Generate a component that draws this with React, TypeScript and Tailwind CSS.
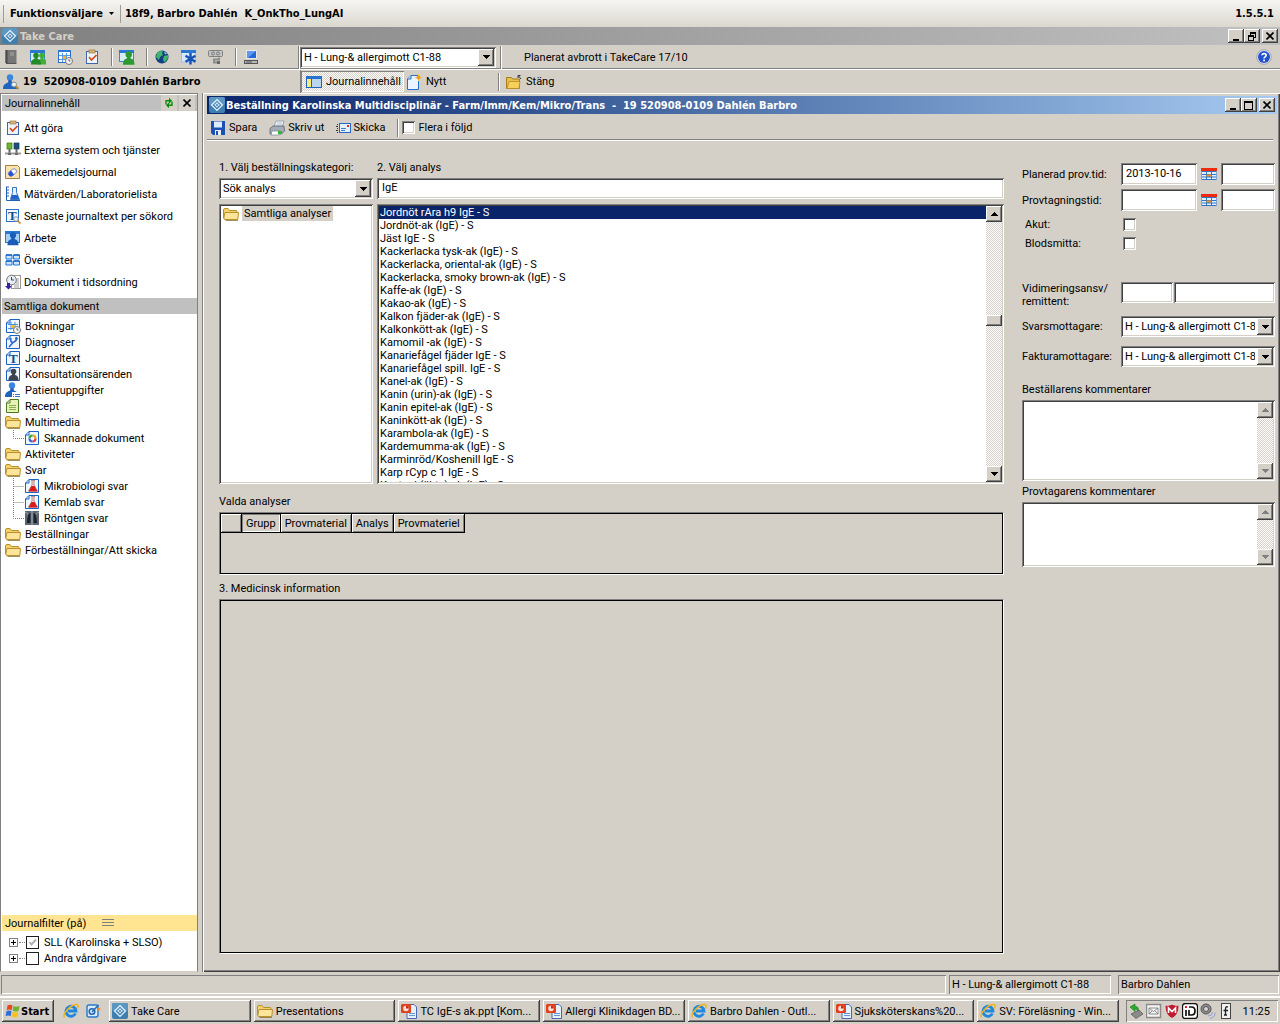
import { useState, type ReactNode } from "react";

// classic 3D bevels
const SUNKEN =
  "shadow-[inset_1px_1px_0_#808080,inset_-1px_-1px_0_#fff,inset_2px_2px_0_#404040,inset_-2px_-2px_0_#d4d0c8]";
const RAISED =
  "shadow-[inset_-1px_-1px_0_#404040,inset_1px_1px_0_#fff,inset_-2px_-2px_0_#808080]";
const THIN_SUNKEN = "shadow-[inset_1px_1px_0_#808080,inset_-1px_-1px_0_#fff]";
const DITHER =
  "bg-[repeating-conic-gradient(#fff_0_25%,#d4d0c8_0_50%)] bg-[length:2px_2px]";
const BOLD = "font-['DejaVu_Sans_Condensed','DejaVu_Sans',sans-serif] font-bold";

type IconProps = { children: ReactNode; size?: number };

const Svg = ({ children, size = 16 }: IconProps) => (
  <svg width={size} height={size} viewBox="0 0 16 16" className="shrink-0" aria-hidden="true">
    {children}
  </svg>
);

const Page = () => (
  <path d="M5 1.5H14.5V14.5H1.5V5Z M1.5 5H5V1.5" fill="#eef6ff" stroke="#1a62c4" />
);

const Person = ({ x = 0, y = 0, color = "#2f8f2f" }) => (
  <g transform={`translate(${x} ${y})`} fill={color}>
    <circle cx="5" cy="3" r="2.8" />
    <path d="M0 12c0-4 1.500-5 3.300-5.500L3.800 5h2.400L6.700 6.500C8.500 7 10 8 10 12Z" />
  </g>
);

const Window = () => (
  <>
    <rect x="0.500" y="1.500" width="14" height="11" fill="#d9ecfb" stroke="#3b86d8" />
    <rect x="0" y="1" width="15" height="3" fill="#2a78d4" />
  </>
);

const TakeCareIcon = () => (
  <Svg>
    <rect width="16" height="16" rx="2" fill="#3f7fb0" />
    <rect width="16" height="8" rx="2" fill="#5a97c2" />
    <path d="M8 2.500 13.500 8 8 13.500 2.500 8Z" fill="none" stroke="#e4f1fa" strokeWidth="1.200" />
    <path d="M8 5.200 10.800 8 8 10.800 5.200 8Z" fill="#cfe3f2" />
    <path d="M6.600 6.600 9.400 9.400M9.400 6.600 6.600 9.400" stroke="#3f7fb0" strokeWidth="0.700" />
  </Svg>
);

const BookIcon = () => (
  <Svg>
    <path d="M2.500 1h11v13h-11Z" fill="#777" />
    <path d="M2.500 1h2v13h-2Z" fill="#4a4a4a" />
    <path d="M7 4h4M7 6h4" stroke="#aaa" />
    <path d="M3 14.500h10.500" stroke="#555" />
  </Svg>
);

const PeopleIcon = () => (
  <Svg>
    <Window />
    <Person x={7} y={3.5} color="#3fae3a" />
    <Person x={1} y={3.5} color="#238a27" />
  </Svg>
);

const PersonWindowIcon = () => (
  <Svg>
    <Window />
    <g transform="translate(4 2) scale(1.150)">
      <Person color="#2c9a2c" />
    </g>
  </Svg>
);

const ClockBadge = () => (
  <>
    <circle cx="12" cy="12" r="3.500" fill="#f4f4f4" stroke="#777" />
    <path d="M12 10v2h1.500" fill="none" stroke="#444" strokeWidth="0.800" />
  </>
);

const CalendarIcon = () => (
  <Svg>
    <rect x="1.500" y="1.500" width="12" height="12" fill="#fff" stroke="#2a6fd0" />
    <rect x="1" y="1" width="13" height="2" fill="#2a78d4" />
    <path d="M5.500 4v9M9.500 4v9M2 6.500h11M2 10.500h11" stroke="#5a9be8" />
    <rect x="6" y="7" width="3" height="3" fill="#f5b81c" />
    <ClockBadge />
  </Svg>
);

const ClipboardIcon = () => (
  <Svg>
    <rect x="2.500" y="2.500" width="11" height="12" fill="#eef4fc" stroke="#3f66a8" />
    <rect x="5" y="1" width="6" height="3" fill="#d8b878" stroke="#9a7a3a" strokeWidth="0.700" />
    <path d="M5 8 7.500 11 12.500 6" fill="none" stroke="#d8481c" strokeWidth="1.700" />
  </Svg>
);

const GlobeIcon = () => (
  <Svg>
    <circle cx="8" cy="8" r="6.500" fill="#103f86" />
    <path d="M3 4c2-2.500 5-2.500 6-2L8 4 9 6 6 8 5 11 2 8Z" fill="#3fb46a" />
    <path d="M10 7l4-1c.5 3-1 6-4 7.500L9 10Z" fill="#3fb46a" />
    <path d="M10 2.500l3 2-2 1Z" fill="#7fd7f0" />
  </Svg>
);

const StarIcon = () => (
  <Svg>
    <rect x="0.500" y="2" width="14" height="11" fill="#d6e8fa" stroke="#9cc0e4" />
    <path d="M0 1h15v3H0Z" fill="#2a78d4" />
    <path d="M9.500 4v11.500M4.500 6.800l10 6M14.500 6.800l-10 6" stroke="#1453b4" strokeWidth="2.400" />
  </Svg>
);

const CertificateIcon = () => (
  <Svg>
    <rect x="0.500" y="1.500" width="14" height="6" rx="1" fill="#c4c4c4" stroke="#808080" />
    <circle cx="5" cy="4.500" r="1.500" fill="none" stroke="#777" />
    <circle cx="10" cy="4.500" r="1.500" fill="none" stroke="#777" />
    <path d="M11 8.500v2H6v3h5" fill="none" stroke="#8c8c8c" strokeWidth="2" />
    <path d="M9 13.500h3" stroke="#6a6a6a" strokeWidth="3" />
  </Svg>
);

const ComputerIcon = () => (
  <Svg>
    <rect x="3.500" y="1.500" width="10" height="8" fill="#2465d8" stroke="#e8e8e8" />
    <path d="M4 2h9L5 9H4Z" fill="#5e97f0" />
    <rect x="1.500" y="11.500" width="13" height="3" fill="#b8b8b8" stroke="#555" />
    <path d="M3 13h6" stroke="#555" />
  </Svg>
);

const HelpIcon = () => (
  <Svg>
    <circle cx="8" cy="8" r="7.300" fill="#d8e2f4" stroke="#9a9a9a" strokeWidth="0.800" />
    <circle cx="8" cy="8" r="6" fill="#2351cc" />
    <path d="M6 6.300C6 4 10.200 4 10.200 6.300 10.200 7.800 8 7.800 8 9.500" fill="none" stroke="#fff" strokeWidth="1.600" />
    <rect x="7.200" y="10.600" width="1.700" height="1.700" fill="#fff" />
  </Svg>
);

const PatientSearchIcon = () => (
  <Svg>
    <circle cx="7" cy="3.500" r="3.200" fill="#3b86dc" />
    <path d="M0 15c0-5 3-5.500 5-6.500L5.500 6h3L9 8.500c2 1 5 1 5 6.500Z" fill="#1f64c0" />
    <circle cx="11" cy="10.500" r="2.500" fill="#e8f2fb" stroke="#888" />
    <path d="M13 12.500 15.500 15" stroke="#c08a30" strokeWidth="2" />
  </Svg>
);

const PanelIcon = () => (
  <Svg>
    <rect x="0.500" y="2.500" width="15" height="11" fill="#b9d6ee" stroke="#1f62b8" />
    <rect x="0" y="2" width="16" height="3" fill="#2672cc" />
    <rect x="1" y="5" width="4" height="8" fill="#f8ec7a" />
    <path d="M5.500 5v8" stroke="#1f62b8" />
  </Svg>
);

const NewIcon = () => (
  <Svg>
    <path d="M5 1.500H12.500V15.500H1.500V5Z" fill="#eaf5ff" stroke="#2a6fd0" />
    <path d="M1.500 5H5V1.500" fill="#bcdcf8" stroke="#2a6fd0" />
    <path d="M12.500 0v7M9 3.500h7" stroke="#f9c748" />
    <circle cx="12.500" cy="3.500" r="2" fill="#f59a18" />
  </Svg>
);

const CloseFolderIcon = () => (
  <Svg>
    <path d="M.5 14.500v-11h5l1 1.500h7v9.500Z" fill="#e8c050" stroke="#a87c18" />
    <path d="M1 14.500 3 7.500h11l-1 7Z" fill="#f8cf58" stroke="#b88a20" strokeWidth="0.800" />
    <path d="M15 5 12.500 2M12 4V1.500h2.500" fill="none" stroke="#333" />
  </Svg>
);

const FolderIcon = () => (
  <Svg>
    <path d="M.5 12V4q0-1.500 1.500-1.500h3l1.500 2H13q1 0 1 1V12Z" fill="#f3d06a" stroke="#b8912c" />
    <path d="M1.500 13.500.8 12 2 6.500H15.500L14.800 13.500Z" fill="#fbe59a" stroke="#b8912c" />
    <path d="M2.500 14.500h12.500" stroke="#7a6424" strokeWidth="0.700" />
  </Svg>
);

const NetworkIcon = () => (
  <Svg>
    <rect x="2" y="1" width="5" height="6" fill="#6cb82c" stroke="#3a7414" strokeWidth="0.700" />
    <rect x="9" y="1" width="5" height="6" fill="#1c4f80" stroke="#123a60" strokeWidth="0.700" />
    <path d="M4.500 7v4M11.500 7v4" stroke="#666" strokeWidth="2" />
    <path d="M0 11.500h16" stroke="#9a9a9a" strokeWidth="2" />
    <path d="M3 11h3v2H3ZM10 11h3v2h-3Z" fill="#6a6a6a" />
  </Svg>
);

const PillIcon = () => (
  <Svg>
    <path d="M.5 1.500h12l2 2v11H.5Z" fill="#fbe3ae" stroke="#a8803c" />
    <g transform="rotate(-38 7.500 8.500)">
      <rect x="3" y="6" width="9" height="5" rx="2.500" fill="#f4f6ff" stroke="#5a6cc0" strokeWidth="0.700" />
      <path d="M7.500 6H5.500a2.500 2.500 0 0 0 0 5h2Z" fill="#2b50d8" />
    </g>
  </Svg>
);

const FlaskIcon = () => (
  <Svg>
    <path d="M1 1h3M1 4h3M1 7h3M1 10h3M1.500 1v13.500H15" fill="none" stroke="#1f5fb4" />
    <path d="M7.500 1.500h4v5l3 7h-9l2-7Z" fill="#e4f1fc" stroke="#3a78c0" />
    <path d="M7 9h5.500l1.500 4H5.500Z" fill="#1f64c8" />
  </Svg>
);

const LetterT = () => (
  <text x="4" y="13" fontSize="13" fontWeight="700" fontFamily="Liberation Serif, serif" fill="#0f4f8c">
    T
  </text>
);

const TextSearchIcon = () => (
  <Svg>
    <rect x="1.500" y="1.500" width="12" height="12" fill="#f2f8ff" stroke="#2a6fc0" />
    <g transform="translate(-1 -1)">
      <LetterT />
    </g>
    <circle cx="11" cy="11" r="2.300" fill="#e8f2fb" stroke="#8894a4" />
    <path d="M12.800 12.800 15.500 15.500" stroke="#c89038" strokeWidth="1.800" />
  </Svg>
);

const WorkIcon = () => (
  <Svg>
    <rect x="0.500" y="1.500" width="14" height="11" fill="#a8d0f4" stroke="#2a78d4" />
    <rect x="0" y="1" width="15" height="3" fill="#2a78d4" />
    <g transform="translate(2.500 2) scale(1.100)">
      <Person color="#1a5cb8" />
    </g>
  </Svg>
);

const GridIcon = () => (
  <Svg>
    <path d="M1 3h6v4H1ZM8.500 3h6v4h-6ZM1 9h6v4H1ZM8.500 9h6v4h-6Z" fill="#cfe4fa" stroke="#1f78dc" />
    <path d="M1 3h6M8.500 3h6M1 9h6M8.500 9h6" stroke="#1766c8" strokeWidth="1.500" />
  </Svg>
);

const TimeOrderIcon = () => (
  <Svg>
    <rect x="6.500" y="1.500" width="9" height="13" fill="#fff" stroke="#999" />
    <path d="M11 5h3M11 7h3M11 9h3M9 11h5M9 13h5" stroke="#777" strokeWidth="0.700" />
    <circle cx="6.500" cy="6" r="4.800" fill="#e8eef8" stroke="#777" />
    <path d="M6.500 3v3h2.500" fill="none" stroke="#444" />
    <path d="M2 9v3H0l3.500 3.500L7 12H5V9Z" fill="#3a1fa0" />
  </Svg>
);

const BookingDocIcon = () => (
  <Svg>
    <Page />
    <path d="M6 4v8M10 4v8M3 6.500h10M3 10.500h8" stroke="#4a90e4" />
    <rect x="6.500" y="7" width="3" height="3" fill="#f5c21c" />
    <ClockBadge />
  </Svg>
);

const DiagnosisIcon = () => (
  <Svg>
    <Page />
    <path d="M6 4c-1 4 1 5 3 4s3-3 2-5M8 8.500 4 13" fill="none" stroke="#2c62d0" strokeWidth="1.500" />
    <circle cx="11.500" cy="4.500" r="1.300" fill="#2c62d0" />
  </Svg>
);

const TextDocIcon = () => (
  <Svg>
    <Page />
    <LetterT />
  </Svg>
);

const ConsultIcon = () => (
  <Svg>
    <Page />
    <Person x={3.5} y={2.5} color="#3c4450" />
  </Svg>
);

const PatientIcon = () => (
  <Svg>
    <circle cx="7" cy="3.500" r="3.200" fill="#3b86dc" />
    <path d="M0 15c0-5 3-5.500 5-6.500L5.500 6h3L9 8.500c2 1 4 1 4 6.500Z" fill="#1f64c0" />
    <rect x="7" y="10" width="9" height="6" fill="#fff" />
    <path d="M8 12.500h1M10 12.500h5M8 14.500h1M10 14.500h5" stroke="#3a78c0" />
  </Svg>
);

const RecipeIcon = () => (
  <Svg>
    <path d="M5 1.500H13.500V14.500H1.500V5Z M1.500 5H5V1.500" fill="#e8f2b8" stroke="#4c7a1c" />
    <path d="M4 7.500h7M4 9.500h7M4 11.500h7" stroke="#8cac50" />
  </Svg>
);

const ScanIcon = () => (
  <Svg>
    <Page />
    <g fill="none" strokeWidth="2.200">
      <path d="M8.500 5.500A3 3 0 0 1 11.500 8.500" stroke="#f0a020" />
      <path d="M11.500 8.500A3 3 0 0 1 8.500 11.500" stroke="#e04040" />
      <path d="M8.500 11.500A3 3 0 0 1 5.500 8.500" stroke="#4060d8" />
      <path d="M5.500 8.500A3 3 0 0 1 8.500 5.500" stroke="#38a838" />
    </g>
  </Svg>
);

const LabDocIcon = () => (
  <Svg>
    <Page />
    <path d="M7 2.500h4M8 3v4l-3.500 6h9L10 7V3" fill="#f4dede" stroke="#a06060" strokeWidth="0.700" />
    <path d="M7.500 8h3l3 5.500h-9Z" fill="#d81c1c" />
  </Svg>
);

const XrayIcon = () => (
  <Svg>
    <rect x="1" y="1" width="14" height="14" fill="#5c6670" />
    <path d="M6.500 3C4 3 3 9 3 13h3.500ZM9.500 3C12 3 13 9 13 13H9.500Z" fill="#1c222a" />
    <path d="M8 1v14" stroke="#a4b0bc" />
    <path d="M1 2l3 2M15 2l-3 2" stroke="#9cacb8" />
  </Svg>
);

const SaveIcon = () => (
  <Svg>
    <path d="M1 1h14v14H3L1 13Z" fill="#1c50b4" />
    <rect x="4" y="1.500" width="8" height="6" fill="#dcecfc" />
    <rect x="5" y="10" width="6" height="5" fill="#e8eef8" />
    <rect x="6" y="11" width="2" height="4" fill="#1c50b4" />
  </Svg>
);

const PrintIcon = () => (
  <Svg>
    <path d="M5 7 7 1h8l-2 6Z" fill="#f2f6fa" stroke="#8a94a0" strokeWidth="0.800" />
    <path d="M8 3h5M7.500 5h5" stroke="#9ab" strokeWidth="0.700" />
    <path d="M1 8.500 4 6h11l.5 5-3 3H1Z" fill="#a4acb8" stroke="#5a626c" strokeWidth="0.800" />
    <path d="M3 11h8l-1 4H2Z" fill="#fff" stroke="#7a828c" strokeWidth="0.700" />
    <rect x="9" y="11" width="4" height="3" fill="#30b838" />
  </Svg>
);

const SendIcon = () => (
  <Svg>
    <rect x="4.500" y="3.500" width="11" height="9" fill="#e4f0fc" stroke="#2468c8" />
    <path d="M6 8.500h5M6 10.500h4" stroke="#3a7cd4" />
    <rect x="12" y="5" width="2" height="2" fill="#e82c1c" />
    <path d="M2 4.500h1M1 6.500h2M2 8.500h1M1 10.500h2M2 12.500h1" stroke="#333" />
  </Svg>
);

const DateIcon = () => (
  <Svg>
    <rect x="0.500" y="2" width="15" height="12" fill="#2f74c8" />
    <rect x="0" y="2" width="16" height="3" fill="#f0280c" />
    <path d="M1 6h4v2H1ZM6 6h4v2H6ZM11 6h4v2h-4ZM1 9h4v1.500H1ZM11 9h4v1.500h-4ZM1 11.500h4v1.500H1ZM6 11.500h4v1.500H6ZM11 11.500h4v1.500h-4Z" fill="#e4f2ff" />
    <rect x="5.500" y="8.500" width="5" height="2" fill="#f09820" />
  </Svg>
);

const IeIcon = () => (
  <Svg>
    <path d="M12.500 10.500A5 5 0 1 1 13 8H5" fill="none" stroke="#1e88dc" strokeWidth="2.800" />
    <path d="M1.500 14.500C-1 11 8 1 14 1.500c2 .5 1 3 0 4" fill="none" stroke="#f0b41c" strokeWidth="1.500" />
  </Svg>
);

const OutlookIcon = () => (
  <Svg>
    <rect x="2" y="2" width="11" height="12" rx="2" fill="#d8ecfc" stroke="#2a78cc" strokeWidth="1.400" />
    <circle cx="7" cy="8.500" r="2.800" fill="none" stroke="#1c64b8" strokeWidth="1.500" />
    <path d="M7 9 13.500 2" stroke="#2a68b4" strokeWidth="1.500" />
    <path d="M13 4.500 16 6l-3 2Z" fill="#f08c1c" />
  </Svg>
);

const PptIcon = () => (
  <Svg>
    <path d="M6 1.500h7l2.500 2.500v11.500H6Z" fill="#e8f0fc" stroke="#4468b0" />
    <path d="M8 10.500h6M8 12.500h6" stroke="#6a94d8" />
    <rect x="0" y="1" width="10" height="9" rx="1.500" fill="#e0401c" />
    <circle cx="5" cy="5.500" r="2.800" fill="#fbe0d8" />
    <path d="M5 5.500V2.700A2.800 2.800 0 0 1 7.800 5.500Z" fill="#c02c10" />
  </Svg>
);

const StartIcon = () => (
  <Svg>
    <path d="M2.500 2.500Q5 1 7.500 2.500L6.700 7.300Q4.500 6 1.700 7.200Z" fill="#e8481c" />
    <path d="M8.500 3Q11 4.300 14.500 3L13.500 8Q10.500 9 7.700 7.800Z" fill="#6cb42c" />
    <path d="M1.500 8.200Q4 7 6.500 8.300L5.700 13Q3.500 11.800.6 13Z" fill="#2c6cdc" />
    <path d="M7.500 8.800Q10 10 13.300 9L12.400 14Q9.500 15 6.700 13.700Z" fill="#f8c01c" />
  </Svg>
);

const TrayDeviceIcon = () => (
  <Svg>
    <path d="M3 11 11 7l4 4-7 4.500Z" fill="#8a8a8a" stroke="#555" strokeWidth="0.700" />
    <path d="M2 4l5-3v2.500c3 0 4 2 3 4.500-1-1.500-2-2-3-2V8.500Z" fill="#2cac2c" stroke="#177017" strokeWidth="0.600" />
  </Svg>
);

const TrayMailIcon = () => (
  <Svg>
    <rect x="0.500" y="1.500" width="14" height="13" fill="#f4f4f4" stroke="#8a8a8a" strokeWidth="1.500" />
    <path d="M3 5h9v6H3Zl4.500 3.500L12 5M3 11l3-3M12 11 9 8" fill="none" stroke="#777" strokeWidth="0.800" />
  </Svg>
);

const TrayShieldIcon = () => (
  <Svg>
    <path d="M1 2q3.500 1 7-1 3.500 2 7 1c0 7-2 11-7 13.500C3 13 1 9 1 2Z" fill="#c01c30" stroke="#ddd" />
    <path d="M4.500 10V5L8 8.500 11.500 5v5" fill="none" stroke="#fff" strokeWidth="1.600" />
  </Svg>
);

const TrayDIcon = () => (
  <Svg>
    <rect x="0.500" y="0.500" width="15" height="15" rx="3" fill="#fff" stroke="#111" strokeWidth="1.300" />
    <path d="M4 7v6M7 4h2.500q3.500 0 3.500 4t-3.500 4H7V7" fill="none" stroke="#111" strokeWidth="1.700" />
    <rect x="3" y="3" width="2" height="2" fill="#e02020" />
  </Svg>
);

const TrayVolumeIcon = () => (
  <Svg>
    <circle cx="6" cy="6" r="5" fill="#8c8c8c" stroke="#555" />
    <circle cx="6" cy="6" r="2.500" fill="#d4d4d4" stroke="#555" />
    <path d="M8 13q4 0 4.500-4M10 15.500q5-1 5-6" fill="none" stroke="#8c9ce0" />
  </Svg>
);

const TrayFIcon = () => (
  <Svg>
    <rect x="3.500" y="0.500" width="9" height="15" fill="#f0f0f0" stroke="#444" />
    <path d="M10 4Q7.500 3 7.500 6v6M5.500 7.500H10M6 12h3" fill="none" stroke="#222" strokeWidth="1.300" />
  </Svg>
);

const RefreshIcon = () => (
  <Svg size={12}>
    <path d="M4 10V5h5M12 6v5H7" fill="none" stroke="#0a8a0a" strokeWidth="1.800" />
    <path d="M8 1l4 4-4 4ZM8 7l-4 4 4 4Z" fill="#0a8a0a" />
  </Svg>
);

const CrossIcon = () => (
  <svg width="8" height="8" viewBox="0 0 8 8" aria-hidden="true">
    <path d="M.5.5 7.500 7.500M7.500.5.5 7.500" stroke="#000" strokeWidth="1.600" />
  </svg>
);

const Arrow = ({ up = false, color = "#000" }) => (
  <svg width="7" height="4" viewBox="0 0 7 4" shapeRendering="crispEdges" aria-hidden="true">
    <path d={up ? "M0 4 3.500 0 7 4Z" : "M0 0h7L3.500 4Z"} fill={color} />
  </svg>
);

const WindowButtons = ({ restore = false }) => {
  const button = `flex h-3.5 w-4 items-center justify-center bg-[#d4d0c8] ${RAISED}`;
  return (
    <div className="flex">
      <button className={button} aria-label="Minimera">
        <svg width="10" height="9" viewBox="0 0 10 9">
          <path d="M2 7h6v2H2Z" />
        </svg>
      </button>
      <button className={button} aria-label={restore ? "Återställ" : "Maximera"}>
        <svg width="10" height="9" viewBox="0 0 10 9" shapeRendering="crispEdges">
          {restore ? (
            <path d="M3 0h6v6H7V5h1V2H4v1H3ZM1 3h6v6H1ZM2 5v3h4V5Z" fillRule="evenodd" />
          ) : (
            <path d="M0 0h9v9H0ZM1 2v6h7V2Z" fillRule="evenodd" />
          )}
        </svg>
      </button>
      <button className={`ml-0.5 ${button}`} aria-label="Stäng fönster">
        <CrossIcon />
      </button>
    </div>
  );
};

const Separator = () => (
  <span className="mr-1.5 ml-[11px] h-[18px] w-0.5 border-r border-l border-r-white border-l-[#808080]" />
);

const Combo = ({ id, label, value }: { id: string; label?: string; value: string }) => (
  <div className="relative flex h-[21px] w-full">
    <select
      id={id}
      aria-label={label}
      className={`w-full appearance-none rounded-none bg-white pr-5 pl-1 ${SUNKEN}`}
    >
      <option>{value}</option>
    </select>
    <span
      className={`pointer-events-none absolute top-0.5 right-0.5 flex h-[17px] w-4 items-center justify-center bg-[#d4d0c8] ${RAISED}`}
    >
      <Arrow />
    </span>
  </div>
);

const ScrollBar = ({ disabled = false }) => {
  const button = `flex h-4 w-4 shrink-0 items-center justify-center bg-[#d4d0c8] ${RAISED}`;
  const color = disabled ? "#808080" : "#000";
  return (
    <div className={`flex w-4 flex-col ${DITHER}`}>
      <button className={button} aria-label="Rulla upp">
        <Arrow up color={color} />
      </button>
      <div className="flex flex-1 flex-col">
        {!disabled && (
          <>
            <div className="h-[93px]" />
            <div className={`h-[11px] bg-[#d4d0c8] ${RAISED}`} />
          </>
        )}
      </div>
      <button className={button} aria-label="Rulla ned">
        <Arrow color={color} />
      </button>
    </div>
  );
};

const TopBar = () => (
  <header
    className={`flex h-[27px] items-center bg-linear-to-b from-[#f6f6f4] to-[#dad7ce] pr-1.5 pl-[3px] ${BOLD}`}
  >
    <span className="h-[18px] w-px bg-[#a09c94]" />
    <button className="ml-1.5 flex items-center gap-1.5">
      Funktionsväljare
      <svg width="5" height="3" viewBox="0 0 5 3" aria-hidden="true">
        <path d="M0 0h5L2.500 3Z" />
      </svg>
    </button>
    <span className="ml-1.5 h-[18px] w-px bg-[#a09c94]" />
    <span className="ml-1 whitespace-pre">{"18f9, Barbro Dahlén  K_OnkTho_LungAI"}</span>
    <span className="ml-auto">1.5.5.1</span>
  </header>
);

const MainToolbar = () => (
  <div className="flex h-[25px] items-center border-b border-white pl-[3px] shadow-[inset_0_-1px_0_#808080]">
    <div className="flex gap-[11px]">
      <BookIcon />
      <PeopleIcon />
      <CalendarIcon />
      <ClipboardIcon />
    </div>
    <Separator />
    <PersonWindowIcon />
    <Separator />
    <div className="flex gap-[11px]">
      <GlobeIcon />
      <StarIcon />
      <CertificateIcon />
    </div>
    <Separator />
    <ComputerIcon />
    <span className="ml-[39px] h-[23px] w-0.5 border-r border-l border-r-white border-l-[#808080]" />
    <div className="w-[196px]">
      <Combo id="unit" label="Enhet" value="H - Lung-& allergimott C1-88" />
    </div>
    <span className="ml-1 h-[23px] w-0.5 border-r border-l border-r-white border-l-[#808080]" />
    <span className="ml-[22px]">Planerat avbrott i TakeCare 17/10</span>
    <button className="mr-2 ml-auto" aria-label="Hjälp">
      <HelpIcon />
    </button>
  </div>
);

const PatientBar = () => (
  <div className="flex h-[23px] items-center">
    <div className="flex w-[300px] shrink-0 items-center gap-1 pl-[3px]">
      <PatientSearchIcon />
      <span className={`whitespace-pre ${BOLD}`}>{"19  520908-0109 Dahlén Barbro"}</span>
    </div>
    <div className="flex h-full w-[200px] items-center border-l border-[#808080]">
      <button className={`flex h-[21px] w-[103px] items-center gap-1 pl-[5px] ${DITHER} ${THIN_SUNKEN}`}>
        <PanelIcon />
        Journalinnehåll
      </button>
      <button className="ml-0.5 flex items-center gap-1">
        <NewIcon />
        Nytt
      </button>
      <span className="ml-auto h-[18px] w-0.5 border-r border-l border-r-white border-l-[#808080]" />
    </div>
    <button className="ml-1.5 flex items-center gap-1">
      <CloseFolderIcon />
      Stäng
    </button>
  </div>
);

const shortcuts = [
  { icon: <ClipboardIcon />, label: "Att göra" },
  { icon: <NetworkIcon />, label: "Externa system och tjänster" },
  { icon: <PillIcon />, label: "Läkemedelsjournal" },
  { icon: <FlaskIcon />, label: "Mätvärden/Laboratorielista" },
  { icon: <TextSearchIcon />, label: "Senaste journaltext per sökord" },
  { icon: <WorkIcon />, label: "Arbete" },
  { icon: <GridIcon />, label: "Översikter" },
  { icon: <TimeOrderIcon />, label: "Dokument i tidsordning" },
];

type TreeItem = { icon: ReactNode; label: string; child?: boolean; last?: boolean };

const documents: TreeItem[] = [
  { icon: <BookingDocIcon />, label: "Bokningar" },
  { icon: <DiagnosisIcon />, label: "Diagnoser" },
  { icon: <TextDocIcon />, label: "Journaltext" },
  { icon: <ConsultIcon />, label: "Konsultationsärenden" },
  { icon: <PatientIcon />, label: "Patientuppgifter" },
  { icon: <RecipeIcon />, label: "Recept" },
  { icon: <FolderIcon />, label: "Multimedia" },
  { icon: <ScanIcon />, label: "Skannade dokument", child: true, last: true },
  { icon: <FolderIcon />, label: "Aktiviteter" },
  { icon: <FolderIcon />, label: "Svar" },
  { icon: <LabDocIcon />, label: "Mikrobiologi svar", child: true },
  { icon: <LabDocIcon />, label: "Kemlab svar", child: true },
  { icon: <XrayIcon />, label: "Röntgen svar", child: true, last: true },
  { icon: <FolderIcon />, label: "Beställningar" },
  { icon: <FolderIcon />, label: "Förbeställningar/Att skicka" },
];

const Branch = ({ last = false }) => (
  <svg width="19" height="16" viewBox="0 0 19 16" className="shrink-0" aria-hidden="true">
    <path
      d={last ? "M8.500 0V8.500H19" : "M8.500 0V16M8.500 8.500H19"}
      fill="none"
      stroke="#808080"
      strokeDasharray="1 1"
    />
  </svg>
);

const FilterRow = ({ id, label, on = false }: { id: string; label: string; on?: boolean }) => (
  <div className="flex h-4 items-center">
    <button aria-label={`Expandera ${label}`} className="flex">
      <svg width="9" height="9" viewBox="0 0 9 9" shapeRendering="crispEdges">
        <rect x="0.500" y="0.500" width="8" height="8" fill="#fff" stroke="#808080" />
        <path d="M2 4h5v1H2ZM4 2h1v5H4Z" />
      </svg>
    </button>
    <span className="mx-px w-1.5 border-t border-dotted border-[#808080]" />
    <span className="relative flex">
      <input
        id={id}
        type="checkbox"
        defaultChecked={on}
        className="h-[13px] w-[13px] appearance-none border border-[#202020] bg-white"
      />
      {on && (
        <svg className="pointer-events-none absolute inset-0" width="13" height="13" viewBox="0 0 13 13">
          <path d="M3.500 6 5.500 8.500 10 3.500" fill="none" stroke="#b0b0b0" strokeWidth="2" />
        </svg>
      )}
    </span>
    <label htmlFor={id} className="ml-[5px]">
      {label}
    </label>
  </div>
);

const Sidebar = () => (
  <aside className="flex w-[198px] shrink-0 flex-col border border-[#808080] border-b-[#d4d0c8] bg-white pt-px pl-px">
    <div className="flex h-4 items-center bg-[#c0c0c0] pr-0.5 pl-[3px]">
      <h2>Journalinnehåll</h2>
      <button className="ml-auto flex h-4 w-4 items-center justify-center bg-[#d4d0c8]" aria-label="Uppdatera">
        <RefreshIcon />
      </button>
      <button className="ml-0.5 flex h-4 w-4 items-center justify-center bg-[#d4d0c8]" aria-label="Stäng panel">
        <CrossIcon />
      </button>
    </div>
    <ul className="mt-1.5 pl-[3px]">
      {shortcuts.map((item) => (
        <li key={item.label}>
          <a href="#" className="flex h-[22px] items-center gap-[3px]">
            {item.icon}
            {item.label}
          </a>
        </li>
      ))}
    </ul>
    <h2 className="mt-[5px] flex h-4 items-center bg-[#c0c0c0] pl-0.5">Samtliga dokument</h2>
    <ul className="mt-1 pl-[3px]">
      {documents.map((item) => (
        <li key={item.label}>
          <a href="#" className="flex h-4 items-center">
            {item.child && <Branch last={item.last} />}
            {item.icon}
            <span className="ml-1">{item.label}</span>
          </a>
        </li>
      ))}
    </ul>
    <div className="mt-auto flex h-4 items-center gap-4 bg-[#ffe591] pl-[3px]">
      <h2>Journalfilter (på)</h2>
      <span className="h-2 w-3 bg-[repeating-linear-gradient(#808080_0_1px,#ffe591_1px_3px)]" />
    </div>
    <div className="mt-[3px] mb-[5px] pl-[7px]">
      <FilterRow id="filter-sll" label="SLL (Karolinska + SLSO)" on />
      <FilterRow id="filter-other" label="Andra vårdgivare" />
    </div>
  </aside>
);

const analyses = [
  "Jordnöt rAra h9 IgE - S",
  "Jordnöt-ak (IgE) - S",
  "Jäst IgE - S",
  "Kackerlacka tysk-ak (IgE) - S",
  "Kackerlacka, oriental-ak (IgE) - S",
  "Kackerlacka, smoky brown-ak (IgE) - S",
  "Kaffe-ak (IgE) - S",
  "Kakao-ak (IgE) - S",
  "Kalkon fjäder-ak (IgE) - S",
  "Kalkonkött-ak (IgE) - S",
  "Kamomil -ak (IgE) - S",
  "Kanariefågel fjäder IgE - S",
  "Kanariefågel spill. IgE - S",
  "Kanel-ak (IgE) - S",
  "Kanin (urin)-ak (IgE) - S",
  "Kanin epitel-ak (IgE) - S",
  "Kaninkött-ak (IgE) - S",
  "Karambola-ak (IgE) - S",
  "Kardemumma-ak (IgE) - S",
  "Karminröd/Koshenill IgE - S",
  "Karp rCyp c 1 IgE - S",
  "Kastanj (äkta)-ak (IgE) - S",
];

const AnalysisPicker = () => {
  const [selected, setSelected] = useState(0);

  return (
    <div className="flex gap-1">
      <div className="flex w-[154px] shrink-0 flex-col">
        <label htmlFor="category" className="mb-1">
          1. Välj beställningskategori:
        </label>
        <Combo id="category" value="Sök analys" />
        <div className={`mt-[5px] h-[280px] bg-white p-0.5 ${SUNKEN}`}>
          <button className="ml-0.5 flex h-[15px] items-center gap-[3px]">
            <FolderIcon />
            <span className="bg-[#d4d0c8] px-0.5 py-px">Samtliga analyser</span>
          </button>
        </div>
      </div>
      <div className="flex min-w-0 flex-1 flex-col">
        <label htmlFor="analysis" className="mb-1">
          2. Välj analys
        </label>
        <input
          id="analysis"
          defaultValue="IgE"
          className={`h-[21px] w-full bg-white px-[5px] pb-0.5 ${SUNKEN}`}
        />
        <div className={`mt-[5px] flex h-[280px] bg-white p-0.5 ${SUNKEN}`}>
          <ul role="listbox" aria-label="Analyser" className="flex-1 overflow-hidden">
            {analyses.map((name, i) => (
              <li
                key={name}
                role="option"
                aria-selected={i === selected}
                onClick={() => setSelected(i)}
                className={`h-[13px] px-px ${i === selected ? "bg-[#0a246a] text-white" : ""}`}
              >
                {name}
              </li>
            ))}
          </ul>
          <ScrollBar />
        </div>
      </div>
    </div>
  );
};

const GROUP_BOX =
  "border border-[#808080] border-r-white border-b-white shadow-[inset_0_0_0_1px_#000] p-px";

const SelectedTable = () => {
  const th = "h-[19px] border-r border-b border-black px-1 text-left font-normal";
  return (
    <div className={`mt-1 h-[63px] ${GROUP_BOX}`}>
      <table className="border-separate border-spacing-0">
        <thead>
          <tr>
            <th className={`w-[21px] ${th} shadow-[inset_1px_1px_0_#fff,inset_-1px_-1px_0_#808080]`} />
            <th className={`${th} ${THIN_SUNKEN}`}>Grupp</th>
            {["Provmaterial", "Analys", "Provmateriel"].map((name) => (
              <th key={name} className={`${th} shadow-[inset_1px_1px_0_#fff,inset_-1px_-1px_0_#808080]`}>
                {name}
              </th>
            ))}
          </tr>
        </thead>
      </table>
    </div>
  );
};

const CheckBox = ({ id }: { id: string }) => (
  <input id={id} type="checkbox" className={`h-[13px] w-[13px] appearance-none bg-white ${SUNKEN}`} />
);

const DateRow = ({ id, label, value }: { id: string; label: string; value?: string }) => (
  <div className="mb-1 flex h-[22px] items-center">
    <label htmlFor={id} className="w-[99px] shrink-0">
      {label}
    </label>
    <input id={id} defaultValue={value} className={`h-full w-[76px] bg-white px-[5px] pb-0.5 ${SUNKEN}`} />
    <button className="mx-1" aria-label="Välj datum">
      <DateIcon />
    </button>
    <input aria-label={`${label} klockslag`} className={`h-full min-w-0 flex-1 bg-white px-[5px] ${SUNKEN}`} />
  </div>
);

const Comment = ({ id, label, height }: { id: string; label: string; height: string }) => (
  <div className="mb-1">
    <label htmlFor={id} className="mb-1 block">
      {label}
    </label>
    <div className={`flex bg-white p-0.5 ${height} ${SUNKEN}`}>
      <textarea id={id} className="min-w-0 flex-1 resize-none outline-none" />
      <ScrollBar disabled />
    </div>
  </div>
);

const OrderDetails = () => (
  <div className="flex w-[253px] shrink-0 flex-col pt-0.5">
    <DateRow id="planned" label="Planerad prov.tid:" value="2013-10-16" />
    <DateRow id="sampled" label="Provtagningstid:" />
    <div className="flex h-[19px] items-center pl-[3px]">
      <label htmlFor="urgent" className="w-[98px]">
        Akut:
      </label>
      <CheckBox id="urgent" />
    </div>
    <div className="flex h-[19px] items-center pl-[3px]">
      <label htmlFor="blood" className="w-[98px]">
        Blodsmitta:
      </label>
      <CheckBox id="blood" />
    </div>
    <div className="mt-[29px] flex h-[26px] items-start">
      <label htmlFor="referrer" className="w-[99px] shrink-0">
        Vidimeringsansv/ remittent:
      </label>
      <input id="referrer" className={`h-[21px] w-[52px] bg-white px-1 ${SUNKEN}`} />
      <input aria-label="Remittent" className={`ml-px h-[21px] min-w-0 flex-1 bg-white px-1 ${SUNKEN}`} />
    </div>
    <div className="mt-2 flex items-center">
      <label htmlFor="reply" className="w-[99px] shrink-0">
        Svarsmottagare:
      </label>
      <Combo id="reply" value="H - Lung-& allergimott C1-88" />
    </div>
    <div className="mt-[9px] mb-4 flex items-center">
      <label htmlFor="invoice" className="w-[99px] shrink-0">
        Fakturamottagare:
      </label>
      <Combo id="invoice" value="H - Lung-& allergimott C1-88" />
    </div>
    <Comment id="orderer-comment" label="Beställarens kommentarer" height="h-[81px]" />
    <Comment id="sampler-comment" label="Provtagarens kommentarer" height="h-[65px]" />
  </div>
);

const OrderWindow = () => (
  <main className="ml-1 flex min-w-0 flex-1 flex-col border-l border-[#808080]">
    <div className="flex flex-1 flex-col border-t border-l border-white pt-0.5 pr-[3px] pl-[3px] shadow-[inset_-1px_-1px_0_#404040,inset_-2px_-2px_0_#808080]">
      <div className="flex h-[18px] items-center bg-linear-to-r from-[#0a246a] to-[#a6caf0] px-0.5 text-white">
        <TakeCareIcon />
        <h1 className={`ml-px whitespace-pre ${BOLD}`}>
          {"Beställning Karolinska Multidisciplinär - Farm/Imm/Kem/Mikro/Trans  -  19 520908-0109 Dahlén Barbro"}
        </h1>
        <div className="ml-auto">
          <WindowButtons />
        </div>
      </div>
      <div className="mr-1 flex h-[27px] items-center border-b border-white pt-px pl-[3px] shadow-[inset_0_-1px_0_#808080]">
        <button className="flex items-center gap-[3px]">
          <SaveIcon />
          Spara
        </button>
        <button className="ml-3 flex items-center gap-[3px]">
          <PrintIcon />
          Skriv ut
        </button>
        <button className="ml-[11px] flex items-center gap-0.5">
          <SendIcon />
          Skicka
        </button>
        <span className="mr-[3px] ml-[11px] h-[18px] w-0.5 border-r border-l border-r-white border-l-[#808080]" />
        <CheckBox id="sequence" />
        <label htmlFor="sequence" className="ml-1">
          Flera i följd
        </label>
      </div>
      <div className="flex flex-1 gap-[18px] pt-5 pr-0.5 pb-[18px] pl-3">
        <section className="flex min-w-0 flex-1 flex-col">
          <AnalysisPicker />
          <h2 className="mt-[11px]">Valda analyser</h2>
          <SelectedTable />
          <h2 className="mt-[7px]">3. Medicinsk information</h2>
          <div className={`mt-1 flex-1 ${GROUP_BOX}`} />
        </section>
        <OrderDetails />
      </div>
    </div>
  </main>
);

const tasks = [
  { icon: <TakeCareIcon />, label: "Take Care" },
  { icon: <FolderIcon />, label: "Presentations" },
  { icon: <PptIcon />, label: "TC IgE-s ak.ppt [Kom..." },
  { icon: <PptIcon />, label: "Allergi Klinikdagen BD..." },
  { icon: <IeIcon />, label: "Barbro Dahlen - Outl..." },
  { icon: <PptIcon />, label: "Sjuksköterskans%20..." },
  { icon: <IeIcon />, label: "SV: Föreläsning - Win..." },
];

const Taskbar = () => (
  <footer className="flex h-[27px] items-center border-t border-white pr-0.5 pl-0.5">
    <button className={`flex h-[22px] w-[52px] items-center px-[3px] ${RAISED} ${BOLD}`}>
      <StartIcon />
      Start
    </button>
    <div className="ml-[9px] flex gap-1.5">
      <IeIcon />
      <OutlookIcon />
    </div>
    <div className="ml-2 flex min-w-0 flex-1 gap-[3px]">
      {tasks.map((task) => (
        <button
          key={task.label}
          className={`flex h-[22px] min-w-0 flex-1 items-center gap-[3px] overflow-hidden px-[3px] whitespace-nowrap ${RAISED}`}
        >
          {task.icon}
          {task.label}
        </button>
      ))}
    </div>
    <div className={`ml-[7px] flex h-[22px] w-[152px] items-center gap-0.5 pl-0.5 ${THIN_SUNKEN}`}>
      <TrayDeviceIcon />
      <TrayMailIcon />
      <TrayShieldIcon />
      <TrayDIcon />
      <TrayVolumeIcon />
      <TrayFIcon />
      <span className="mr-2 ml-auto">11:25</span>
    </div>
  </footer>
);

export default function App() {
  return (
    <div className="flex min-h-screen flex-col bg-[#d4d0c8] font-[Roboto,'Liberation_Sans',sans-serif] text-[11px] leading-[13px] text-black">
      <TopBar />
      <div className="flex h-[18px] items-center bg-linear-to-r from-[#808080] to-[#c0c0c0] px-0.5 text-[#d4d0c8]">
        <TakeCareIcon />
        <span className={`ml-0.5 ${BOLD}`}>Take Care</span>
        <div className="ml-auto">
          <WindowButtons restore />
        </div>
      </div>
      <MainToolbar />
      <PatientBar />
      <div className="flex flex-1 pb-0.5">
        <Sidebar />
        <OrderWindow />
      </div>
      <div className="flex h-[23px] items-center gap-[3px] border-b border-white px-px pt-px pb-0.5">
        <div className={`h-full flex-1 ${THIN_SUNKEN}`} />
        <div className={`flex h-full w-[162px] items-center px-[3px] ${THIN_SUNKEN}`}>
          H - Lung-&amp; allergimott C1-88
        </div>
        <div className={`ml-1 flex h-full w-[161px] items-center px-[3px] ${THIN_SUNKEN}`}>Barbro Dahlen</div>
      </div>
      <Taskbar />
    </div>
  );
}
